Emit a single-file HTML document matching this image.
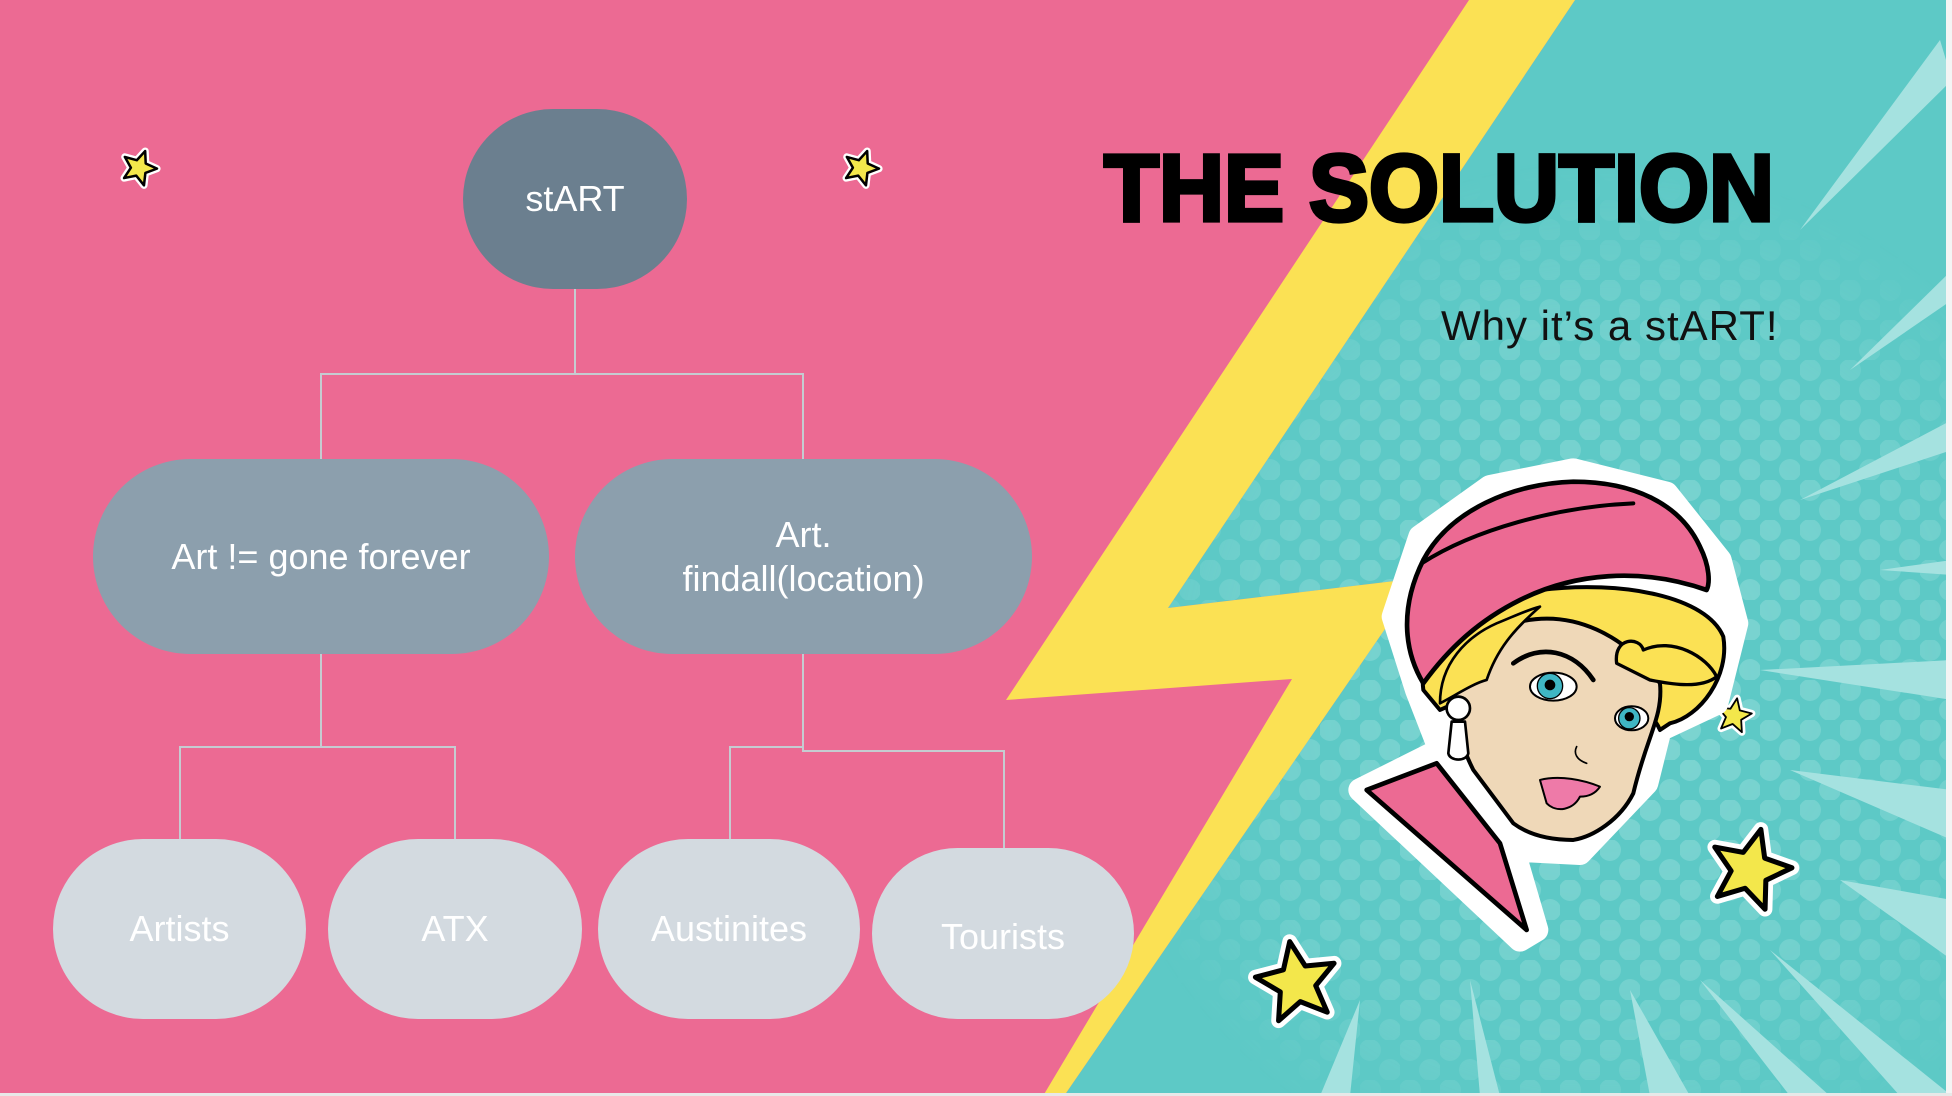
<!DOCTYPE html>
<html><head><meta charset="utf-8"><style>
html,body{margin:0;padding:0;}
body{width:1952px;height:1096px;position:relative;overflow:hidden;background:#ec6a93;font-family:"Liberation Sans",Arial,sans-serif;}
svg{position:absolute;left:0;top:0;}
.node{position:absolute;display:flex;align-items:center;justify-content:center;text-align:center;color:#fff;font-size:36px;line-height:44px;}
.title{position:absolute;left:1104px;top:138px;font-size:90px;font-weight:900;color:#000;letter-spacing:0px;white-space:nowrap;-webkit-text-stroke:4px #000;transform:scaleY(1.05);}
.sub{position:absolute;left:1441px;top:302px;font-size:42px;letter-spacing:1px;color:#111;white-space:nowrap;}
</style></head><body>
<svg width="1952" height="1096" viewBox="0 0 1952 1096">
<defs>
<pattern id="dots" width="40" height="40" patternUnits="userSpaceOnUse">
<circle cx="10" cy="10" r="11" fill="#7fd5d2"/><circle cx="30" cy="30" r="11" fill="#7fd5d2"/>
</pattern>
<radialGradient id="fade" cx="1600" cy="680" r="520" gradientUnits="userSpaceOnUse">
<stop offset="0" stop-color="#fff" stop-opacity="1"/><stop offset="0.7" stop-color="#fff" stop-opacity="0.6"/><stop offset="1" stop-color="#fff" stop-opacity="0"/>
</radialGradient>
<mask id="m"><rect width="1952" height="1096" fill="url(#fade)"/></mask>
<polygon id="st" points="0,-1 0.264,-0.364 0.951,-0.309 0.428,0.139 0.588,0.809 0,0.45 -0.588,0.809 -0.428,0.139 -0.951,-0.309 -0.264,-0.364"/>
</defs>
<polygon points="1575,0 1952,0 1952,1096 1064,1096 1420,578 1168,608" fill="#5dc9c6"/>
<g mask="url(#m)"><polygon points="1575,0 1952,0 1952,1096 1064,1096 1420,578 1168,608" fill="url(#dots)"/></g>
<g fill="#a5e2e0">
<polygon points="1940,40 1800,230 1952,80"/>
<polygon points="1952,270 1850,370 1952,300"/>
<polygon points="1952,420 1800,500 1952,450"/>
<polygon points="1952,560 1880,570 1952,575"/>
<polygon points="1952,660 1760,670 1952,700"/>
<polygon points="1952,790 1790,770 1952,840"/>
<polygon points="1952,900 1840,880 1952,960"/>
<polygon points="1900,1096 1770,950 1952,1096"/>
<polygon points="1790,1096 1700,980 1830,1096"/>
<polygon points="1650,1096 1630,990 1690,1096"/>
<polygon points="1480,1096 1470,980 1500,1096"/>
<polygon points="1320,1096 1360,1000 1350,1096"/>
</g>
<polygon points="1469,0 1575,0 1168,608 1420,578 1064,1096 1043,1096 1292,679 1006,700" fill="#fbe154"/>
<g stroke="#c5cbd1" stroke-width="2" fill="none">
<polyline points="575,289 575,374"/>
<polyline points="321,459 321,374 803,374 803,459"/>
<polyline points="321,654 321,747"/>
<polyline points="180,839 180,747 455,747 455,839"/>
<polyline points="803,654 803,747 730,747 730,839"/>
<polyline points="803,747 803,751 1004,751 1004,848"/>
</g>
<g stroke-linejoin="round">
<use href="#st" transform="translate(139,168) scale(18) rotate(20)" fill="#fff" stroke="#fff" stroke-width="0.4"/>
<use href="#st" transform="translate(139,168) scale(18) rotate(20)" fill="#f3e74b" stroke="#000" stroke-width="0.14"/>
<use href="#st" transform="translate(861,168) scale(18) rotate(20)" fill="#fff" stroke="#fff" stroke-width="0.4"/>
<use href="#st" transform="translate(861,168) scale(18) rotate(20)" fill="#f3e74b" stroke="#000" stroke-width="0.14"/>
<use href="#st" transform="translate(1734,716) scale(18) rotate(10)" fill="#fff" stroke="#fff" stroke-width="0.4"/>
<use href="#st" transform="translate(1734,716) scale(18) rotate(10)" fill="#f3e74b" stroke="#000" stroke-width="0.1"/>
<use href="#st" transform="translate(1750,870) scale(42) rotate(15)" fill="#fff" stroke="#fff" stroke-width="0.35"/>
<use href="#st" transform="translate(1750,870) scale(42) rotate(15)" fill="#f3e74b" stroke="#000" stroke-width="0.12"/>
<use href="#st" transform="translate(1297,983) scale(42) rotate(-10)" fill="#fff" stroke="#fff" stroke-width="0.35"/>
<use href="#st" transform="translate(1297,983) scale(42) rotate(-10)" fill="#f3e74b" stroke="#000" stroke-width="0.12"/>
</g>
<g transform="translate(1340,450) scale(0.3333)" stroke-linejoin="round" stroke-linecap="round">
<path d="M60,1020 L300,900 L230,720 L160,500 L240,260 L450,110 L700,60 L980,130 L1140,330 L1190,520 L1130,760 L960,840 L920,1000 L720,1210 L520,1200 L590,1440 L540,1470 Z" fill="#fff" stroke="#fff" stroke-width="70"/>
<path d="M80,1020 L290,940 L480,1180 L560,1440 Z" fill="#ec6a93" stroke="#000" stroke-width="14"/>
<path d="M250,720 C230,560 380,440 600,420 C850,390 1100,440 1150,560 C1170,680 1080,800 990,820 L960,840 C900,700 600,640 300,780 Z" fill="#fbe154" stroke="#000" stroke-width="12"/>
<path d="M330,700 C360,600 440,560 520,520 C700,470 860,560 960,700 C970,800 920,860 880,1030 C840,1110 760,1160 700,1170 C620,1170 560,1150 520,1120 L400,960 C360,880 330,790 330,700 Z" fill="#efd8b8" stroke="#000" stroke-width="12"/>
<path d="M830,640 C820,560 900,560 910,600 C1000,560 1100,620 1130,680 C1080,720 980,700 930,690 Z" fill="#fbe154" stroke="#000" stroke-width="10"/>
<path d="M300,760 C300,640 380,560 470,520 C520,500 560,480 600,470 C520,540 470,600 440,690 C400,700 340,740 300,760 Z" fill="#fbe154" stroke="#000" stroke-width="8"/>
<path d="M250,700 C190,600 180,470 250,330 C330,180 520,100 700,95 C880,95 1020,160 1080,290 C1110,350 1110,400 1100,420 C900,350 700,370 540,450 C420,510 330,590 250,700 Z" fill="#ec6a93" stroke="#000" stroke-width="14"/>
<path d="M245,340 C400,240 650,170 880,160" fill="none" stroke="#000" stroke-width="12"/>
<path d="M520,640 C600,580 700,600 760,690" fill="none" stroke="#000" stroke-width="14"/>
<ellipse cx="640" cy="710" rx="70" ry="42" fill="#fff" stroke="#000" stroke-width="6"/>
<circle cx="630" cy="708" r="38" fill="#3fb6c4" stroke="#000" stroke-width="4"/>
<circle cx="630" cy="705" r="16" fill="#000"/>
<ellipse cx="875" cy="805" rx="50" ry="36" fill="#fff" stroke="#000" stroke-width="6"/>
<circle cx="868" cy="805" r="32" fill="#3fb6c4" stroke="#000" stroke-width="4"/>
<circle cx="868" cy="800" r="14" fill="#000"/>
<path d="M600,990 C660,975 730,990 780,1010 C760,1040 730,1040 720,1040 C700,1080 650,1090 620,1060 Z" fill="#ee7aa8" stroke="#000" stroke-width="6"/>
<path d="M710,890 C700,910 710,930 740,940" fill="none" stroke="#000" stroke-width="5"/>
<circle cx="355" cy="775" r="35" fill="#fff" stroke="#000" stroke-width="8"/>
<path d="M335,815 L375,815 L385,910 C380,935 330,935 325,910 Z" fill="#fff" stroke="#000" stroke-width="8"/>
</g>
<rect x="1946" y="0" width="6" height="1096" fill="#f4f4f4"/>
<rect x="0" y="1093" width="1952" height="3" fill="#e8e8e8"/>
</svg>
<div class="node" style="left:463px;top:109px;width:224px;height:180px;border-radius:90px;background:#6b7f8f;">stART</div>
<div class="node" style="left:93px;top:459px;width:456px;height:195px;border-radius:98px;background:#8c9fad;">Art != gone forever</div>
<div class="node" style="left:575px;top:459px;width:457px;height:195px;border-radius:98px;background:#8c9fad;">Art.<br>findall(location)</div>
<div class="node" style="left:53px;top:839px;width:253px;height:180px;border-radius:90px;background:#d3dae0;">Artists</div>
<div class="node" style="left:328px;top:839px;width:254px;height:180px;border-radius:90px;background:#d3dae0;">ATX</div>
<div class="node" style="left:598px;top:839px;width:262px;height:180px;border-radius:90px;background:#d3dae0;">Austinites</div>
<div class="node" style="left:872px;top:848px;width:262px;height:171px;border-radius:86px;background:#d3dae0;padding-top:6px;box-sizing:border-box;">Tourists</div>
<div class="title">THE SOLUTION</div>
<div class="sub">Why it’s a stART!</div>
</body></html>
